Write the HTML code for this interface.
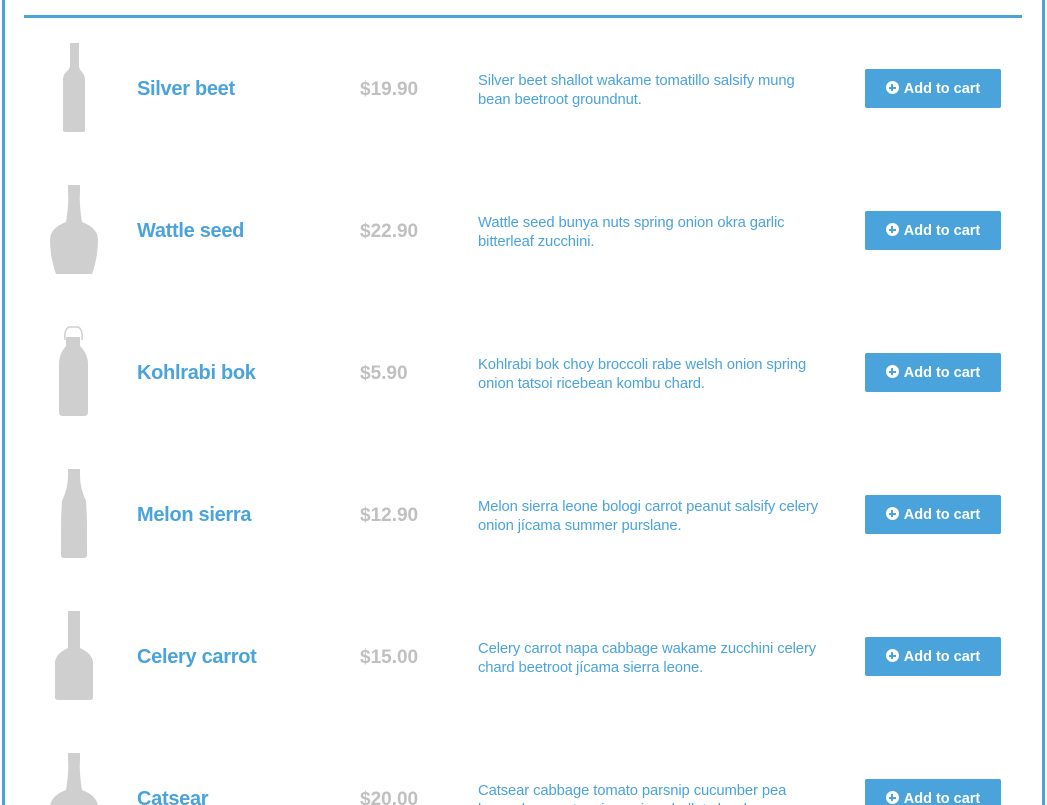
<!DOCTYPE html>
<html><head><meta charset="utf-8"><style>
html,body{margin:0;width:1047px;height:805px;overflow:hidden}
body{background:#fff;font-family:"Liberation Sans",sans-serif;position:relative}
.bl{position:absolute;left:2px;top:0;width:3px;height:805px;background:#4aa3db}
.br{position:absolute;left:1042px;top:0;width:3px;height:805px;background:#4aa3db}
.tl{position:absolute;left:24px;top:15px;width:998px;height:3px;background:#4aa3db}
.row{position:absolute;left:0;width:1047px;height:142px;overflow:hidden}
.t{position:absolute;left:137px;top:78px;font-size:20px;font-weight:bold;color:#4aa3db;letter-spacing:-0.3px}
.p{position:absolute;left:360px;top:79px;font-size:19px;font-weight:bold;color:#c0c0c0}
.d{position:absolute;left:478px;top:72px;width:348px;font-size:14.8px;line-height:19px;color:#4aa3db;letter-spacing:-0.1px}
.b{position:absolute;left:865px;top:69px;width:136px;height:39px;background:#4aa3db;border-radius:2px;color:#fff;font-size:14.5px;font-weight:bold;line-height:41px;text-align:center}
.b i{display:inline-block;width:13px;height:13px;border-radius:50%;background:#fff;position:relative;vertical-align:-1px;margin-right:5px}
.b i:before{content:"";position:absolute;left:3px;top:5.5px;width:7px;height:2px;background:#4aa3db}
.b i:after{content:"";position:absolute;left:5.5px;top:3px;width:2px;height:7px;background:#4aa3db}
svg{position:absolute;left:0;top:0}
</style></head><body>
<div class="bl"></div><div class="br"></div><div class="tl"></div>
<svg width="1047" height="805" fill="#cfcfcf">
<path d="M70 43H79V66Q79 69 82 72Q85 75 85 80V130Q85 132 83 132H66Q63 132 63 130V80Q63 75 66 72Q70 69 70 66Z"/>
<g transform="translate(0,142)"><path d="M68 43H80V50Q79 62 82 80Q98 86 98 98Q98 115 92 132H56Q50 115 50 98Q50 86 66 80Q69 62 68 50Z"/></g>
<g transform="translate(0,284)"><path d="M66 53H80V62Q88 70 88 80V128Q88 132 84 132H63Q59 132 59 128V80Q59 70 66 62Z"/><path d="M65 56Q64 45 69 43H78Q83 45 82 56" fill="none" stroke="#cfcfcf" stroke-width="1.5"/></g>
<g transform="translate(0,426)"><path d="M68 43H80V50Q80 62 86 75Q87 90 87 100V125Q88 132 84 132H64Q60 132 61 125V100Q61 90 62 75Q68 62 68 50Z"/></g>
<g transform="translate(0,568)"><path d="M68 43H80V80Q93 86 93 95V129Q93 132 90 132H58Q55 132 55 129V95Q55 86 68 80Z"/></g>
<g transform="translate(0,710)"><path d="M68 43H80V50Q79 62 82 80Q98 86 98 98Q98 115 92 132H56Q50 115 50 98Q50 86 66 80Q69 62 68 50Z"/></g>
</svg>
<div class="row" style="top:0"><div class="t">Silver beet</div><div class="p">$19.90</div><div class="d">Silver beet shallot wakame tomatillo salsify mung bean beetroot groundnut.</div><div class="b"><i></i>Add to cart</div></div>
<div class="row" style="top:142px"><div class="t">Wattle seed</div><div class="p">$22.90</div><div class="d">Wattle seed bunya nuts spring onion okra garlic bitterleaf zucchini.</div><div class="b"><i></i>Add to cart</div></div>
<div class="row" style="top:284px"><div class="t">Kohlrabi bok</div><div class="p">$5.90</div><div class="d">Kohlrabi bok choy broccoli rabe welsh onion spring onion tatsoi ricebean kombu chard.</div><div class="b"><i></i>Add to cart</div></div>
<div class="row" style="top:426px"><div class="t">Melon sierra</div><div class="p">$12.90</div><div class="d">Melon sierra leone bologi carrot peanut salsify celery onion jícama summer purslane.</div><div class="b"><i></i>Add to cart</div></div>
<div class="row" style="top:568px"><div class="t">Celery carrot</div><div class="p">$15.00</div><div class="d">Celery carrot napa cabbage wakame zucchini celery chard beetroot jícama sierra leone.</div><div class="b"><i></i>Add to cart</div></div>
<div class="row" style="top:710px;height:95px"><div class="t">Catsear</div><div class="p">$20.00</div><div class="d">Catsear cabbage tomato parsnip cucumber pea brussels sprout spring onion shallot chard.</div><div class="b"><i></i>Add to cart</div></div>
</body></html>
